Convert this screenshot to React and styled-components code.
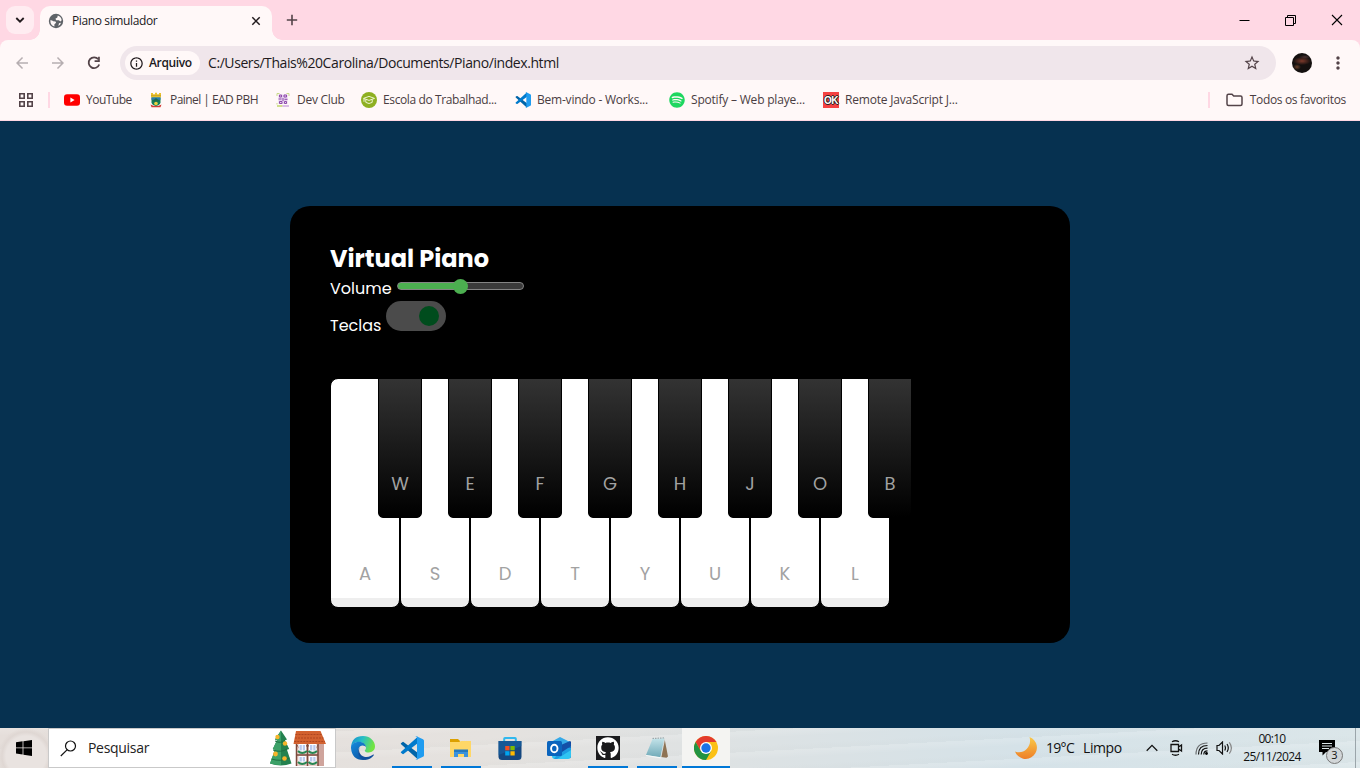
import React from 'react';
import styled, { createGlobalStyle } from 'styled-components';
import { MdArrowBack, MdArrowForward, MdStarBorder, MdMoreVert, MdOutlineInfo } from 'react-icons/md';
import { FaSpotify, FaGithub } from 'react-icons/fa';

const Global = createGlobalStyle`
  * { box-sizing: border-box; }
  html, body { margin: 0; padding: 0; overflow: hidden; }
  body { font-family: "Open Sans", "Noto Sans", sans-serif; }
  svg { display: block; flex: none; }
`;
const ui = '"Open Sans", "Noto Sans", sans-serif';

const Screen = styled.div`
  width: 1360px; height: 768px; display: flex; flex-direction: column; overflow: hidden;
`;

/* Browser window */
const TabStrip = styled.div`
  height: 40px; flex: none; background: #ffd8e4; display: flex; align-items: flex-start; padding: 6px 0 0 6px;
`;
const TabSearch = styled.div`
  width: 28px; height: 28px; border-radius: 9px; background: #ffecf1; display: flex; align-items: center; justify-content: center;
`;
const Tab = styled.div`
  position: relative; width: 232px; height: 34px; margin-left: 6px; padding: 0 11px 5px 8px; background: #fff8f8;
  border-radius: 10px 10px 0 0; display: flex; align-items: center; color: #211a1d;
  &::before, &::after { content: ''; position: absolute; bottom: 0; width: 10px; height: 10px; }
  &::before { left: -10px; background: radial-gradient(circle at 0 0, transparent 9.5px, #fff8f8 10px); }
  &::after { right: -10px; background: radial-gradient(circle at 100% 0, transparent 9.5px, #fff8f8 10px); }
`;
const Text = styled.span`
  font-family: ${ui}; font-size: ${p => p.$size || 12}px; letter-spacing: ${p => p.$ls || 0}px;
  font-weight: ${p => p.$weight || 400}; color: ${p => p.$color || '#4a3d42'}; white-space: nowrap; line-height: 1.35;
`;
const TabTitle = styled(Text)`margin-left: 8px; padding-top: 1px; flex: 1;`;
const NewTab = styled.div`width: 12px; height: 12px; margin: 8px 0 0 14px;`;
const WindowButtons = styled.div`
  margin-left: auto; height: 28px; display: flex; align-items: center; gap: 35px; padding-right: 17px;
`;
const ToolbarBack = styled.div`flex: none; background: #ffd8e4;`;
const Toolbar = styled.div`
  height: 46px; border-radius: 8px 8px 0 0; background: #fff8f8; display: flex; align-items: center; padding: 0 0 0 13px;
`;
const NavIcon = styled.div`
  width: 18px; height: 18px; flex: none; margin-right: 18px; color: ${p => (p.$dim ? '#b6aeb1' : '#534348')};
`;
const Omnibox = styled.div`
  width: 1156px; height: 34px; flex: none; margin-left: -1px; border-radius: 17px; background: #f0e6eb; display: flex; align-items: center; padding: 0 15px 0 5px;
`;
const FileChip = styled.div`
  width: 75px; height: 24px; border-radius: 12px; background: #fff8f8; display: flex; align-items: center; padding-left: 4px; gap: 5px; color: #211a1d;
`;
const Address = styled(Text)`flex: 1; margin-left: 8px; padding-top: 1px;`;
const Avatar = styled.div`
  width: 20px; height: 20px; flex: none; margin: 0 16px; border-radius: 50%;
  background: radial-gradient(ellipse 9px 4px at 10px 8px, #7d3a2b, transparent), radial-gradient(ellipse 4px 3px at 5px 14px, #6a4029, transparent), radial-gradient(ellipse 6px 2px at 13px 4px, #4b3434, transparent), #14100f;
`;
const Bookmarks = styled.div`
  height: 35px; flex: none; background: #fff8f8; border-bottom: 1px solid #ffd8e4; display: flex; align-items: center; padding: 0 14px 7px 19px;
`;
const Divider = styled.div`width: 2px; height: 16px; background: #ffd8e4; margin-left: ${p => p.$left}px; margin-right: ${p => p.$right}px;`;
const Bookmark = styled.div`
  display: flex; align-items: center; gap: 6px; width: ${p => p.$w}px; flex: none;
`;
const Label = styled(Text)`padding-top: 2px;`;
const AllBookmarks = styled.div`display: flex; align-items: center; gap: 7px;`;
const RightGroup = styled.div`margin-left: auto; display: flex; align-items: center;`;

/* Piano page */
const Page = styled.main`
  flex: 1; background: #063150; display: flex; align-items: center; justify-content: center;
`;
const Piano = styled.section`
  width: 780px; height: 437px; background: #000; border-radius: 20px; padding: 35px 40px; color: #fff;
  font-family: Poppins, Inter, sans-serif;
`;
const Heading = styled.h2`
  margin: 0; font-size: 24px; line-height: 36px; font-weight: 700; white-space: nowrap;
`;
const ControlRow = styled.div`
  display: flex; height: ${p => p.$h}px; font-size: 16px; line-height: 24px;
`;
const ControlName = styled.span`width: ${p => p.$w}px; margin-top: ${p => p.$top}px;`;
const Slider = styled.div`
  width: 127px; height: 8px; margin-top: 5px; border: 1px solid #858585; border-radius: 4px;
  background: linear-gradient(to right, #4caf50 62px, #3b3b3b 62px); display: flex; align-items: center;
`;
const Thumb = styled.div`width: 15px; height: 15px; flex: none; margin-left: 54.5px; border-radius: 50%; background: #4caf50;`;
const Switch = styled.div`
  width: 60px; height: 30px; border-radius: 15px; background: #4b4b4b; display: flex; align-items: center; justify-content: flex-end; padding: 0 7px;
`;
const Knob = styled.div`width: 20px; height: 20px; border-radius: 50%; background: #004c1d;`;
const Keys = styled.ul`
  display: flex; list-style: none; margin: 40px 0 0; padding: 0;
`;
const Key = styled.li`
  flex: none; display: flex; align-items: flex-end; justify-content: center; color: #a2a2a2; font-size: 18px; line-height: 27px;
  border: 1px solid #000; padding-bottom: 20px;
`;
const WhiteKey = styled(Key)`
  width: 70px; height: 230px; border-radius: 8px; background: linear-gradient(#fff 96%, #eee 96%);
`;
const BlackKey = styled(Key)`
  position: relative; width: 44px; height: 140px; margin: 0 -22px; border-radius: 0 0 5px 5px; background: linear-gradient(#333, #000);
`;

/* Taskbar */
const Taskbar = styled.footer`
  height: 40px; flex: none; display: flex; align-items: stretch;
  background: repeating-linear-gradient(177deg, rgba(255,255,255,.13) 0 2px, transparent 8px 15px, rgba(190,195,195,.06) 19px 21px),
    linear-gradient(90deg, #e5deda 0, #e5e2df 36%, #dce2e4 57%, #d5e2e8 75%, #dbe6e9 100%);
`;
const Start = styled.div`
  width: 48px; display: flex; align-items: center; justify-content: center;
  background: radial-gradient(circle at 26px 28px, #e9e3e0 0 20px, #dfd7d3 24px, transparent 28px);
`;
const Search = styled.div`
  width: 288px; background: #fff; border: 1px solid #c9c9c9; display: flex; align-items: center; padding: 0 8px 0 11px;
`;
const SearchText = styled(Text)`margin-left: 11px; flex: 1; padding-top: 1px;`;
const Apps = styled.div`display: flex; gap: 1px; margin-left: 3px;`;
const TaskButton = styled.div`
  width: 48px; display: flex; align-items: center; justify-content: center;
  background-color: ${p => (p.$active ? '#f4f4f2' : 'transparent')};
  background-image: ${p => (p.$open || p.$active ? 'linear-gradient(#0078d7, #0078d7)' : 'none')};
  background-repeat: no-repeat; background-position: center bottom; background-size: ${p => (p.$active ? 48 : 40)}px 2px;
`;
const Tray = styled.div`margin-left: auto; display: flex; align-items: center;`;
const TrayItem = styled.div`width: ${p => p.$w}px; display: flex; align-items: center;`;
const Clock = styled.div`width: 64px; display: flex; flex-direction: column; align-items: center; gap: 2px; margin-right: 14px;`;
const Notice = styled.div`position: relative; width: 26px; height: 26px; margin: 8px 11px 0 0;`;
const Count = styled.div`
  position: absolute; left: 8px; top: 8px; width: 17px; height: 17px; border-radius: 50%; border: 1px solid #777; background: #d2d6d8;
  display: flex; align-items: center; justify-content: center;
`;
const Desktop = styled.div`width: 5px; height: 40px; border-left: 1px solid #9ba5aa;`;

const Globe = () => (
  <svg width="16" height="16" viewBox="0 0 16 16">
    <circle cx="8" cy="8" r="7.2" fill="#5f6368" />
    <path d="M2.300 7.200Q4 7 5.200 8.200L7.500 8.400Q8.600 9.200 7.600 10.300L6.400 11.200v2.400Q2.400 12.400 2.300 7.200Z" fill="#fff8f8" />
    <path d="M9.800 2.600Q13.200 3.800 13.700 7.300L12.400 8.600 10.900 7.200H8.200L7.400 5.800 9.300 4.600Z" fill="#fff8f8" />
    <path d="M11 10.200 13 9.700Q12.300 12 10.300 13Z" fill="#fff8f8" />
  </svg>
);
const Reload = () => (
  <svg width="18" height="18" viewBox="0 0 18 18">
    <path d="M13.300 5.300A5.400 5.400 0 1 0 14.200 10.500" fill="none" stroke="currentColor" strokeWidth="1.800" />
    <path d="M14.800 2.800V8H9.600V6.300h3.500V2.800Z" fill="currentColor" />
  </svg>
);
const VSCode = ({ size }) => (
  <svg width={size} height={size} viewBox="0 0 24 24">
    <path d="M1 7.300 2.600 6Q3 5.700 3.500 6L18 17v6.500L1.100 8.300Q.5 7.800 1 7.300Z" fill="#0065a9" />
    <path d="M1 16.700 2.600 18Q3 18.300 3.500 18L18 7V.5L1.100 15.700Q.5 16.200 1 16.700Z" fill="#007acc" />
    <path d="M17 .5 23 3.200Q24 3.700 24 4.800v14.400q0 1.100-1 1.600l-6 2.700q-1 .4-1.700-.4.9.6 1.700-.4V1.300q-.8-1-1.700-.4Q16 .1 17 .5Z" fill="#1f9cf0" />
  </svg>
);
const YouTube = () => (
  <svg width="16" height="16" viewBox="0 0 16 16">
    <rect x="0" y="2.300" width="16" height="11.400" rx="3" fill="#f00" /><path d="M6.400 5.600v4.800L10.600 8Z" fill="#fff" />
  </svg>
);
const Crest = () => (
  <svg width="16" height="16" viewBox="0 0 16 16">
    <path d="M3 1h2v1.200h2V.7h2v1.500h2V1h2v4.500H3Z" fill="#e9c02c" /><path d="M3 3.600h10" stroke="#b08a24" strokeWidth=".5" />
    <path d="M3.500 5.500h9v5Q12 13 8 14q-4-1-4.500-3.500Z" fill="#16805a" /><path d="M3.500 5.500h9v2.300h-9Z" fill="#2b78ad" /><path d="M4 9.500 8 6l4 3.500Z" fill="#1c6b50" />
    <path d="M2.500 12.500Q8 15.500 13.500 12.500l-1 2.800h-9Z" fill="#d13e35" /><circle cx="8" cy="11.500" r="1.800" fill="#ead23f" />
  </svg>
);
const DevClub = () => (
  <svg width="16" height="16" viewBox="0 0 16 16">
    <path d="M2 4V1.500h2.500M11.500 1.500H14V4M2 11v1.500" fill="none" stroke="#c9da89" strokeWidth="1" />
    <path d="M3.500 2.500h9v9.500h-9Z" fill="#e6d3ee" />
    <path d="M4.500 3h2v2h-2ZM9 3h2.500v2H9ZM4.500 9.500H7v2H4.500ZM9.500 9.500h2v2h-2ZM3.500 7h3M8 6v3M9.500 7.300h3" fill="none" stroke="#8f4aab" strokeWidth="1" />
    <path d="M2 14h5.500" stroke="#b7d052" strokeWidth="1.300" /><path d="M7.500 14H14" stroke="#c79ddb" strokeWidth="1.300" />
  </svg>
);
const School = () => (
  <svg width="16" height="16" viewBox="0 0 16 16">
    <circle cx="8" cy="8" r="8" fill="#8eb021" />
    <path d="m2.500 6.400 5.500-2 5.500 2-5.500 2ZM4.800 7.600v2.800Q8 12.600 11.200 10.400V7.600M3 6.800v3" fill="none" stroke="#eef5d3" strokeWidth="1" />
  </svg>
);
const Okay = styled.div`
  width: 16px; height: 16px; background: #f44242; color: #fff; font: bold 10px/17px "Liberation Sans", sans-serif; letter-spacing: -.6px;
  text-align: center; text-shadow: 1px 0 #222, -1px 0 #222, 0 1px #222, 0 -1px #222;
`;
const Town = () => (
  <svg width="57" height="36" viewBox="0 0 57 36">
    <path d="M11 .5 5 9.500l2 .8L2.800 19l2.200.8L0 33.500q11 4 21.500 0L17 19.800l2.200-.8L15 10.300l2-.8Z" fill="#24814f" />
    <path d="M11 .5V35Q5 35 0 33.500L5 19.800 2.800 19 7 10.300l-2-.8Z" fill="#3ca168" />
    <path d="M5 11q6 3 10-1M3 20q8 3 14-1M1.500 29q9 3 18-1" fill="none" stroke="#1d6e42" strokeWidth="1" />
    <g fill="#f6b42a"><circle cx="7.500" cy="7" r="2.200" /><circle cx="15" cy="13.500" r="2.200" /><circle cx="5.500" cy="24" r="2.400" /><circle cx="14.500" cy="28.500" r="2.300" /></g>
    <path d="M26 12h24l4 3v21H26Z" fill="#e9cfca" /><path d="M48 12 54 14v22h-6Z" fill="#cfa49c" />
    <path d="M26 1h24.500l5.500 13H23.500Z" fill="#d2612f" /><path d="M25.500 4.500H52M25 8h28.500M24.300 11.500H55" stroke="#b04620" strokeWidth="1" strokeDasharray="2 1" />
    <path d="M26.500 14v22M37.500 14v22M48 14v22M26 25h22" stroke="#7c4a3c" strokeWidth="1.500" />
    <path d="m27 15 4 6m6-6-4 6M38 15l4 6m6-6-4 6" stroke="#8a5242" strokeWidth="1" />
    <path d="M29 14.500h6.500v6.500H29ZM39.500 14.500H46V21h-6.500ZM29 26.500h6.500v5.500H29ZM39.500 26.500H46V32h-6.500Z" fill="#b9c9ee" stroke="#fff" />
    <path d="M28 21q4 4 9 0M38.500 21q4 4 8.500 0M28 32q4 4 9 0M38.500 32q4 4 8.500 0" fill="none" stroke="#288753" strokeWidth="2" />
    <path d="M32.300 15v6M42.800 15v6M32.300 27v5M42.800 27v5" stroke="#fff" strokeWidth=".9" />
  </svg>
);
const Edge = () => (
  <svg width="24" height="24" viewBox="0 0 24 24">
    <defs>
      <linearGradient id="e1" x1="0" y1="0" x2="1" y2=".3"><stop stopColor="#168bd0" /><stop offset=".5" stopColor="#28bfc5" /><stop offset="1" stopColor="#71e443" /></linearGradient>
      <linearGradient id="e2" x1="0" y1="0" x2=".7" y2="1"><stop stopColor="#168de0" /><stop offset="1" stopColor="#0c54a2" /></linearGradient>
    </defs>
    <path d="M0 11Q1 0 12 0c7 0 12 5 12 10.300 0 4-3 6.200-6.200 6.200-2.700 0-4-1-4-1.800 0-.7 1.200-1.200 1.200-3C15 8.600 12 6 8 6 4 6 1 8 0 11Z" fill="url(#e1)" />
    <path d="M0 11C.4 8 4 5.800 8 5.800c3.800 0 6.800 2.500 7 5.400C14 9.400 9 8 7.500 13c-1.300 5.500 4.500 11 9.200 9.800Q14.600 24 12 24 1 24 0 12Z" fill="url(#e2)" />
    <path d="M9.500 10C6.600 13 8 20 14 21c4 .6 6.700-1.400 8.200-2.400.5-.3.9.1.6.6C21 22 17.500 24 14 23.800 8 23.200 4.500 15 9.500 10Z" fill="#104f9c" />
  </svg>
);
const Explorer = () => (
  <svg width="24" height="24" viewBox="0 0 24 24">
    <path d="M1 3h8l2 2v4H1Z" fill="#dca000" /><path d="M1 6h9l2-1h10v16H1Z" fill="#ffd767" />
    <path d="M5 21v-7h14v7h-4v-3H9v3Z" fill="#3b93dd" /><path d="M5 13.500h14V16H5Z" fill="#2579bd" />
  </svg>
);
const Store = () => (
  <svg width="24" height="24" viewBox="0 0 24 24">
    <path d="M6.200 6V2.800q0-.8.8-.8h10q.8 0 .8.8V6" fill="none" stroke="#30b8ee" strokeWidth="2" />
    <path d="M.5 5h23v15.500q0 3.500-3.500 3.500H4Q.5 24 .5 20.500Z" fill="#15477f" /><path d="M.5 5h23v5L.5 19Z" fill="#1766aa" opacity=".55" />
    <path d="M7.200 10h4.300v4.300H7.200Z" fill="#f25022" /><path d="M12.400 10h4.300v4.300h-4.300Z" fill="#7fba00" /><path d="M7.200 15.200h4.300v4.300H7.200Z" fill="#00a4ef" /><path d="M12.400 15.200h4.300v4.300h-4.300Z" fill="#ffb900" />
  </svg>
);
const Outlook = () => (
  <svg width="24" height="24" viewBox="0 0 24 24">
    <path d="M4 6 13 1l10 5-8 9H4Z" fill="#35a9e8" /><path d="m24 5-9 9 9 8Z" fill="#123f91" /><path d="M5 12h19v8q0 3-3 3H8q-3 0-3-3Z" fill="#2fc5f3" />
    <path d="m12 16 12-7v5L10 23H7Z" fill="#158cdc" opacity=".7" /><path d="M14 9 23 5l1 3v2l-9 6Z" fill="#134fa8" />
    <rect y="5" width="15" height="15" rx="1.500" fill="#0a64bd" /><ellipse cx="7.300" cy="12.500" rx="3.200" ry="3.800" fill="none" stroke="#fff" strokeWidth="1.900" />
  </svg>
);
const GitTile = styled.div`width: 24px; height: 24px; background: #1b1b1d; color: #fff; display: flex; align-items: center; justify-content: center;`;
const Notepad = () => (
  <svg width="24" height="24" viewBox="0 0 24 24">
    <defs><linearGradient id="np" x1="0" y1="0" x2="0" y2="1"><stop stopColor="#c4e4ea" /><stop offset="1" stopColor="#6fa9b7" /></linearGradient></defs>
    <path d="m19.500 2.500 3.500 18-1.500 1.200L16 21Z" fill="#8e7354" /><path d="m7.500 3 12-.8L15.500 21.500 1 19Z" fill="url(#np)" />
    <path d="m7.500 2.500 12-.6" stroke="#9aa8ac" strokeWidth="1.200" strokeDasharray="1.500 1" /><path d="M1 19.500l15 2.400" fill="none" stroke="#f5f8f8" strokeWidth="1.200" /><path d="m15.800 21.500 3.900-18.500" stroke="#dfe9eb" strokeWidth=".8" />
  </svg>
);
const Chrome = () => (
  <svg width="24" height="24" viewBox="0 0 24 24">
    <circle cx="12" cy="12" r="12" fill="#fbc116" />
    <path d="M1.600 6A12 12 0 0 1 22.400 6H12L6.800 15Z" fill="#e33b2e" /><path d="M1.600 6A12 12 0 0 0 12 24l5.200-9L12 17.700 6.800 15Z" fill="#229342" />
    <circle cx="12" cy="12" r="6" fill="#fff" /><circle cx="12" cy="12" r="4.700" fill="#1a73e8" />
  </svg>
);

const white = ['A', 'S', 'D', 'T', 'Y', 'U', 'K', 'L'];
const black = ['W', 'E', 'F', 'G', 'H', 'J', 'O', 'B'];

export default function App() {
  return (
    <Screen>
      <Global />
      <TabStrip>
        <TabSearch><svg width="10" height="8" viewBox="0 0 10 8"><path d="m1.300 2 3.700 3.700L8.700 2" fill="none" stroke="#211a1d" strokeWidth="1.800" /></svg></TabSearch>
        <Tab>
          <Globe />
          <TabTitle $color="#211a1d" $ls={-0.38}>Piano simulador</TabTitle>
          <svg width="10" height="10" viewBox="0 0 10 10"><path d="m1.300 1.300 7.400 7.400m0-7.400L1.300 8.700" stroke="#211a1d" strokeWidth="1.500" /></svg>
        </Tab>
        <NewTab><svg width="12" height="12" viewBox="0 0 12 12"><path d="M6 .8v10.400M.8 6h10.400" stroke="#534348" strokeWidth="1.600" /></svg></NewTab>
        <WindowButtons>
          <svg width="11" height="11"><path d="M.5 5.500h10" stroke="#000" /></svg>
          <svg width="11" height="11"><path d="M.5 2.500h8v8h-8ZM2.500 2V.5h8v8H9" fill="none" stroke="#000" /></svg>
          <svg width="12" height="12"><path d="m1 1 10 10M11 1 1 11" stroke="#000" strokeWidth="1.100" /></svg>
        </WindowButtons>
      </TabStrip>
      <ToolbarBack>
        <Toolbar>
          <NavIcon $dim><MdArrowBack size={18} /></NavIcon>
          <NavIcon $dim><MdArrowForward size={18} /></NavIcon>
          <NavIcon><Reload /></NavIcon>
          <Omnibox>
            <FileChip><MdOutlineInfo size={15} /><Text $weight={600} $color="#211a1d" $ls={-0.35}>Arquivo</Text></FileChip>
            <Address $size={14} $color="#211a1d" $ls={-0.42}>C:/Users/Thais%20Carolina/Documents/Piano/index.html</Address>
            <MdStarBorder size={18} color="#534348" />
          </Omnibox>
          <Avatar />
          <MdMoreVert size={20} color="#534348" />
        </Toolbar>
      </ToolbarBack>
      <Bookmarks>
        <svg width="14" height="14"><path d="M.8.8h4.400v4.400H.8ZM8.800.8h4.400v4.400H8.800ZM.8 8.800h4.400v4.400H.8ZM8.800 8.800h4.400v4.400H8.800Z" fill="none" stroke="#534348" strokeWidth="1.600" /></svg>
        <Divider $left={15} $right={14} />
        <Bookmark $w={84}><YouTube /><Label $ls={-0.52}>YouTube</Label></Bookmark>
        <Bookmark $w={127}><Crest /><Label $ls={-0.55}>Painel | EAD PBH</Label></Bookmark>
        <Bookmark $w={86}><DevClub /><Label $ls={-0.28}>Dev Club</Label></Bookmark>
        <Bookmark $w={154}><School /><Label $ls={-0.38}>Escola do Trabalhad...</Label></Bookmark>
        <Bookmark $w={154}><VSCode size={16} /><Label $ls={-0.21}>Bem-vindo - Works...</Label></Bookmark>
        <Bookmark $w={154}><FaSpotify size={16} color="#1ed760" /><Label $ls={-0.2}>Spotify – Web playe...</Label></Bookmark>
        <Bookmark $w={140}><Okay>OK</Okay><Label $ls={-0.19}>Remote JavaScript J...</Label></Bookmark>
        <RightGroup>
          <Divider $left={0} $right={16} />
          <AllBookmarks>
            <svg width="17" height="14" viewBox="0 0 17 14"><path d="M1 11V2.700Q1 1.200 2.500 1.200H6L7.700 3h6.800Q16 3 16 4.500V11q0 1.500-1.500 1.500h-12Q1 12.500 1 11Z" fill="none" stroke="#534348" strokeWidth="1.500" /></svg>
            <Label $ls={-0.34}>Todos os favoritos</Label>
          </AllBookmarks>
        </RightGroup>
      </Bookmarks>

      <Page>
        <Piano>
          <Heading>Virtual Piano</Heading>
          <ControlRow $h={24}>
            <ControlName $w={67} $top={0}>Volume</ControlName>
            <Slider><Thumb /></Slider>
          </ControlRow>
          <ControlRow $h={37}>
            <ControlName $w={56} $top={13}>Teclas</ControlName>
            <Switch><Knob /></Switch>
          </ControlRow>
          <Keys>
            {white.map((k, i) => (
              <React.Fragment key={k}>
                <WhiteKey>{k}</WhiteKey>
                <BlackKey>{black[i]}</BlackKey>
              </React.Fragment>
            ))}
          </Keys>
        </Piano>
      </Page>

      <Taskbar>
        <Start><svg width="16" height="16" viewBox="0 0 16 16"><path d="M0 2.300 6.600 1.300v6.200H0ZM7.400 1.200 16 0v7.500H7.400ZM0 8.300h6.600v6.200L0 13.600ZM7.400 8.300H16V16l-8.600-1.300Z" fill="#000" /></svg></Start>
        <Search>
          <svg width="17" height="17" viewBox="0 0 17 17"><circle cx="10.500" cy="6" r="5" fill="none" stroke="#111" strokeWidth="1.200" /><path d="M7 9.800.8 16" stroke="#111" strokeWidth="1.200" /></svg>
          <SearchText $size={14} $color="#222" $ls={-0.3}>Pesquisar</SearchText>
          <Town />
        </Search>
        <Apps>
          <TaskButton><Edge /></TaskButton>
          <TaskButton $open><VSCode size={24} /></TaskButton>
          <TaskButton $open><Explorer /></TaskButton>
          <TaskButton><Store /></TaskButton>
          <TaskButton><Outlook /></TaskButton>
          <TaskButton $open><GitTile><FaGithub size={22} /></GitTile></TaskButton>
          <TaskButton $open><Notepad /></TaskButton>
          <TaskButton $active><Chrome /></TaskButton>
        </Apps>
        <Tray>
          <TrayItem $w={31}>
            <svg width="22" height="22" viewBox="0 0 22 22"><defs><linearGradient id="m" x1="0" y1="0" x2="0" y2="1"><stop stopColor="#f9ca49" /><stop offset="1" stopColor="#ee7f28" /></linearGradient></defs><path d="M14.500 0A11.300 11.300 0 1 1 0 14.500C8 18 17.500 10 14.500 0Z" fill="url(#m)" /></svg>
          </TrayItem>
          <TrayItem $w={37}><Text $size={14} $color="#111" $ls={-0.7}>19°C</Text></TrayItem>
          <TrayItem $w={63}><Text $size={14} $color="#111" $ls={-0.4}>Limpo</Text></TrayItem>
          <TrayItem $w={24}><svg width="12" height="8"><path d="m.7 6.700 5.300-5.300 5.300 5.300" fill="none" stroke="#111" strokeWidth="1.300" /></svg></TrayItem>
          <TrayItem $w={25}><svg width="13" height="16" viewBox="0 0 13 16"><path d="M1 4.500h7.500v7H1ZM8.500 7 11.500 5v6l-3-2M2 1.700Q5.500-.2 9 1.700M2 14.300q3.500 1.900 7 0" fill="none" stroke="#111" strokeWidth="1.300" /></svg></TrayItem>
          <TrayItem $w={21}><svg width="13" height="13" viewBox="0 0 13 13"><g fill="none" stroke="#111" strokeWidth="1.200"><path d="M1 12.500Q1 1 12.500 1" stroke="#6b6f71" /><path d="M3.500 12.500q0-9 9-9M6.200 12.500q0-6.300 6.300-6.300M8.800 12.500q0-3.700 3.700-3.700" /></g><circle cx="11.500" cy="11.500" r="1.400" /></svg></TrayItem>
          <TrayItem $w={24}><svg width="17" height="14" viewBox="0 0 17 14"><g fill="none" stroke="#111" strokeWidth="1.200"><path d="M1 4.500h2L6.500 1v12L3 9.500H1ZM8.700 4.500q1.500 2.500 0 5M11 3q2.600 4 0 8" /><path d="M13.300 1.300q4.200 5.700 0 11.400" stroke="#888" /></g></svg></TrayItem>
          <Clock><Text $color="#111" $ls={-0.7}>00:10</Text><Text $color="#111" $ls={-0.6}>25/11/2024</Text></Clock>
          <Notice>
            <svg width="18" height="18" viewBox="0 0 18 18"><path d="M1 1h16v12H8l-3.500 3.500V13H1Z" fill="#000" /><path d="M4 4.500h10M4 7h10M4 9.500h7" stroke="#dce5e8" strokeWidth="1" /></svg>
            <Count><Text $size={11} $color="#111">3</Text></Count>
          </Notice>
          <Desktop />
        </Tray>
      </Taskbar>
    </Screen>
  );
}
